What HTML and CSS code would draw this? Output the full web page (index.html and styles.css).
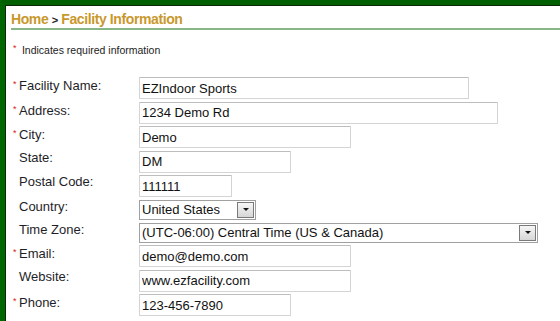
FILE: index.html
```html
<!doctype html>
<html>

<head>
	<meta charset="UTF-8">
	<title>Facility Information</title>
	<link rel="stylesheet" href="styles.css">
</head>

<body>
	<div class="frame">
		<div class="inner">
			<!-- breadcrumb -->
			<h1 class="crumb">Home <span class="sep">&gt;</span> Facility Information</h1>

			<p class="note"><span class="req">*</span> Indicates required information</p>

			<div class="form">
				<div class="label"><span class="req">*</span>Facility Name:</div>
				<div><input class="txt w330" type="text" value="EZIndoor Sports"></div>

				<div class="label"><span class="req">*</span>Address:</div>
				<div><input class="txt w359" type="text" value="1234 Demo Rd"></div>

				<div class="label"><span class="req">*</span>City:</div>
				<div><input class="txt w212" type="text" value="Demo"></div>

				<div class="label">State:</div>
				<div><input class="txt w152" type="text" value="DM"></div>

				<div class="label">Postal Code:</div>
				<div><input class="txt w93" type="text" value="111111"></div>

				<div class="label">Country:</div>
				<div>
					<div class="select w117">
						<span class="val">United States</span>
						<span class="btn"><span class="arrow"></span></span>
					</div>
				</div>

				<div class="label">Time Zone:</div>
				<div>
					<div class="select w399">
						<span class="val">(UTC-06:00) Central Time (US &amp; Canada)</span>
						<span class="btn"><span class="arrow"></span></span>
					</div>
				</div>

				<div class="label"><span class="req">*</span>Email:</div>
				<div><input class="txt w212" type="text" value="demo@demo.com"></div>

				<div class="label">Website:</div>
				<div><input class="txt w212" type="text" value="www.ezfacility.com"></div>

				<div class="label"><span class="req">*</span>Phone:</div>
				<div><input class="txt w152" type="text" value="123-456-7890"></div>
			</div>
		</div>
	</div>
</body>

</html>
```

FILE: styles.css
```css
body {
	margin: 0;
	padding: 0;
	background: #fff;
	font-family: "Liberation Sans", Arial, sans-serif;
	color: #222;
}

.frame {
	border-top: 5px solid #005f00;
	border-left: 5px solid #006600;
	height: 321px;
	box-sizing: border-box;
	overflow: hidden;
}

.inner {
	border-top: 1px solid #0b260b;
	border-left: 1px solid #0b260b;
	padding: 6px 0 0 5px;
	height: 100%;
}

.crumb {
	margin: 0;
	font-family: "Liberation Sans", Arial, sans-serif;
	font-size: 14px;
	letter-spacing: -0.4px;
	font-weight: bold;
	color: #c9982c;
	padding-bottom: 1px;
	border-bottom: 2px solid #86b686;
	line-height: 14px;
}

.crumb .sep {
	color: #222;
	font-size: 11px;
}

.note {
	margin: 12px 0 0 2px;
	font-size: 10.5px;
	line-height: 12px;
	color: #222;
}

.req {
	color: #e02020;
	font-size: 9px;
	display: inline-block;
	width: 6px;
	vertical-align: 3px;
}

.label .req {
	margin-left: -6px;
}

.form {
	display: grid;
	grid-template-columns: 126px auto;
	row-gap: 2.6px;
	margin-top: 21px;
	margin-left: 2px;
}

.label {
	font-size: 13px;
	line-height: 14px;
	padding-left: 6px;
	color: #1e1e28;
}

.txt {
	display: block;
	height: 22px;
	box-sizing: border-box;
	margin: 0;
	padding: 0 2px;
	border: 1px solid #d4d4d4;
	border-top-color: #bdbdbd;
	border-radius: 1px;
	font-family: "Liberation Sans", Arial, sans-serif;
	font-size: 13px;
	color: #111;
	background: #fff;
}

.select {
	display: flex;
	align-items: center;
	height: 20px;
	box-sizing: border-box;
	border: 1px solid #a0a0a0;
	background: #fff;
	font-size: 13px;
	color: #111;
}

.select .val {
	flex: 1;
	padding-left: 2px;
	white-space: nowrap;
	overflow: hidden;
}

.select .btn {
	width: 17px;
	height: 16px;
	margin-right: 1px;
	box-sizing: border-box;
	border: 1px solid #7a7a7a;
	background: linear-gradient(#f6f6f6, #d6d6d6);
	display: flex;
	align-items: center;
	justify-content: center;
}

.arrow {
	width: 0;
	height: 0;
	border-left: 3px solid transparent;
	border-right: 3px solid transparent;
	border-top: 3px solid #111;
}

.w330 { width: 330px; }
.w359 { width: 359px; }
.w212 { width: 212px; }
.w152 { width: 152px; }
.w93 { width: 93px; }
.w117 { width: 117px; }
.w399 { width: 399px; }
```
